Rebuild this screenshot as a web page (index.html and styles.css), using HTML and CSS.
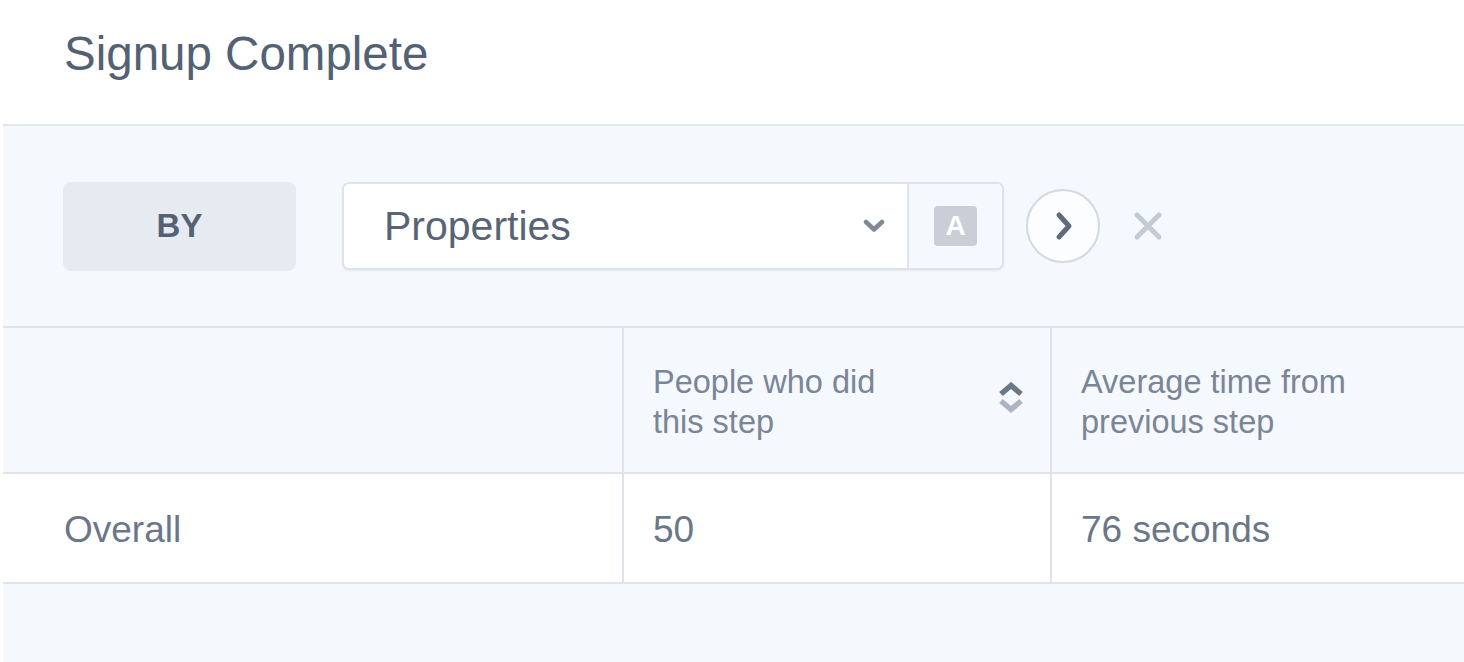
FILE: index.html
```html
<!DOCTYPE html>
<html lang="en">
<head>
<meta charset="utf-8">
<title>Signup Complete</title>
<link rel="stylesheet" href="styles.css">
</head>
<body>
<div class="page">
  <header class="title-bar">
    <h1 class="title">Signup Complete</h1>
  </header>
  <section class="panel">
    <div class="toolbar">
      <button class="by-btn" type="button">BY</button>
      <div class="select-group">
        <div class="select">
          <span class="select-label">Properties</span>
          <svg class="select-caret" width="22" height="14" viewBox="0 0 22 14" aria-hidden="true">
            <path d="M3 3 L11 10.5 L19 3" fill="none" stroke="currentColor" stroke-width="4.5" stroke-linecap="round" stroke-linejoin="round"/>
          </svg>
        </div>
        <div class="type-slot">
          <span class="type-badge">A</span>
        </div>
      </div>
      <button class="next-btn" type="button" aria-label="Next">
        <svg width="20" height="30" viewBox="0 0 20 30" aria-hidden="true">
          <path d="M5 4 L15 15 L5 26" fill="none" stroke="currentColor" stroke-width="5" stroke-linecap="round" stroke-linejoin="round"/>
        </svg>
      </button>
      <button class="remove-btn" type="button" aria-label="Remove">
        <svg width="30" height="30" viewBox="0 0 30 30" aria-hidden="true">
          <path d="M4 4 L26 26 M26 4 L4 26" fill="none" stroke="currentColor" stroke-width="5" stroke-linecap="round"/>
        </svg>
      </button>
    </div>
    <div class="grid">
      <div class="cell head first"></div>
      <div class="cell head">
        <span class="head-text">People who did<br>this step</span>
        <svg class="sort" width="26" height="32" viewBox="0 0 26 32" aria-hidden="true">
          <path class="sort-up" d="M3 12 L13 3.5 L23 12" fill="none" stroke-width="5.5" stroke-linejoin="miter"/>
          <path class="sort-down" d="M3 19 L13 27.5 L23 19" fill="none" stroke-width="5.5" stroke-linejoin="miter"/>
        </svg>
      </div>
      <div class="cell head last">
        <span class="head-text">Average time from<br>previous step</span>
      </div>
      <div class="cell body first">Overall</div>
      <div class="cell body">50</div>
      <div class="cell body last">76 seconds</div>
    </div>
  </section>
</div>
</body>
</html>
```

FILE: styles.css
```css
* {
  box-sizing: border-box;
}

html, body {
  margin: 0;
  padding: 0;
  background: #ffffff;
}

body {
  font-family: "Liberation Sans", Arial, Helvetica, sans-serif;
  width: 1464px;
  height: 662px;
  overflow: hidden;
}

.page {
  display: flex;
  flex-direction: column;
  height: 662px;
}

.title-bar {
  height: 124px;
  padding: 27px 0 0 64px;
  flex: none;
}

.title {
  margin: 0;
  font-size: 47.5px;
  line-height: 54px;
  font-weight: 400;
  color: #536174;
}

.panel {
  flex: 1;
  margin-left: 3px;
  background: #f5f8fc;
  border-top: 2px solid #e0e6ed;
}

.toolbar {
  height: 200px;
  display: flex;
  align-items: center;
  padding-left: 60px;
}

.by-btn {
  width: 233px;
  height: 89px;
  border: none;
  border-radius: 8px;
  background: #e6ebf1;
  color: #566273;
  font-family: inherit;
  font-size: 33px;
  font-weight: 700;
  padding: 0;
  margin-right: 46px;
}

.select-group {
  display: flex;
  width: 662px;
  height: 88px;
  border: 2px solid #dde3ea;
  border-radius: 7px;
  background: #ffffff;
  box-shadow: 0 1px 2px rgba(120, 135, 155, 0.12);
  overflow: hidden;
  margin-right: 22px;
}

.select {
  flex: 1;
  display: flex;
  align-items: center;
  padding: 0 22px 0 40px;
  border-right: 2px solid #e0e5ec;
}

.select-label {
  flex: 1;
  font-size: 41px;
  line-height: 46px;
  color: #586476;
}

.select-caret {
  color: #7f8a99;
}

.type-slot {
  width: 93px;
  display: flex;
  align-items: center;
  justify-content: center;
  background: #f5f8fc;
}

.type-badge {
  width: 43px;
  height: 40px;
  border-radius: 4px;
  background: #c9ced7;
  color: #ffffff;
  font-size: 28px;
  font-weight: 700;
  line-height: 40px;
  text-align: center;
}

.next-btn {
  width: 74px;
  height: 74px;
  border-radius: 50%;
  border: 2px solid #d3d9e1;
  background: #fcfdfe;
  color: #5f6b7c;
  display: flex;
  align-items: center;
  justify-content: center;
  padding: 0 0 0 2px;
  margin-right: 32px;
}

.remove-btn {
  width: 32px;
  height: 32px;
  border: none;
  background: transparent;
  color: #c5cbd4;
  padding: 0;
  display: flex;
  align-items: center;
  justify-content: center;
}

.grid {
  display: grid;
  grid-template-columns: 621px 428px 1fr;
  border-top: 2px solid #dfe4eb;
}

.cell {
  display: flex;
  align-items: center;
  border-bottom: 2px solid #dfe4eb;
  border-right: 2px solid #dfe4eb;
  padding-left: 29px;
}

.cell.last {
  border-right: none;
}

.cell.first {
  padding-left: 61px;
}

.cell.head {
  height: 146px;
  padding-top: 3px;
  padding-right: 26px;
  background: #f5f8fc;
  font-size: 32.5px;
  line-height: 40px;
  color: #7a8698;
}

.head-text {
  flex: 1;
}

.sort {
  margin-top: -8px;
}

.sort-up {
  stroke: #6b7789;
}

.sort-down {
  stroke: #abb4c0;
}

.cell.body {
  height: 110px;
  padding-top: 4px;
  background: #ffffff;
  font-size: 37px;
  line-height: 42px;
  color: #6b7788;
}
```
